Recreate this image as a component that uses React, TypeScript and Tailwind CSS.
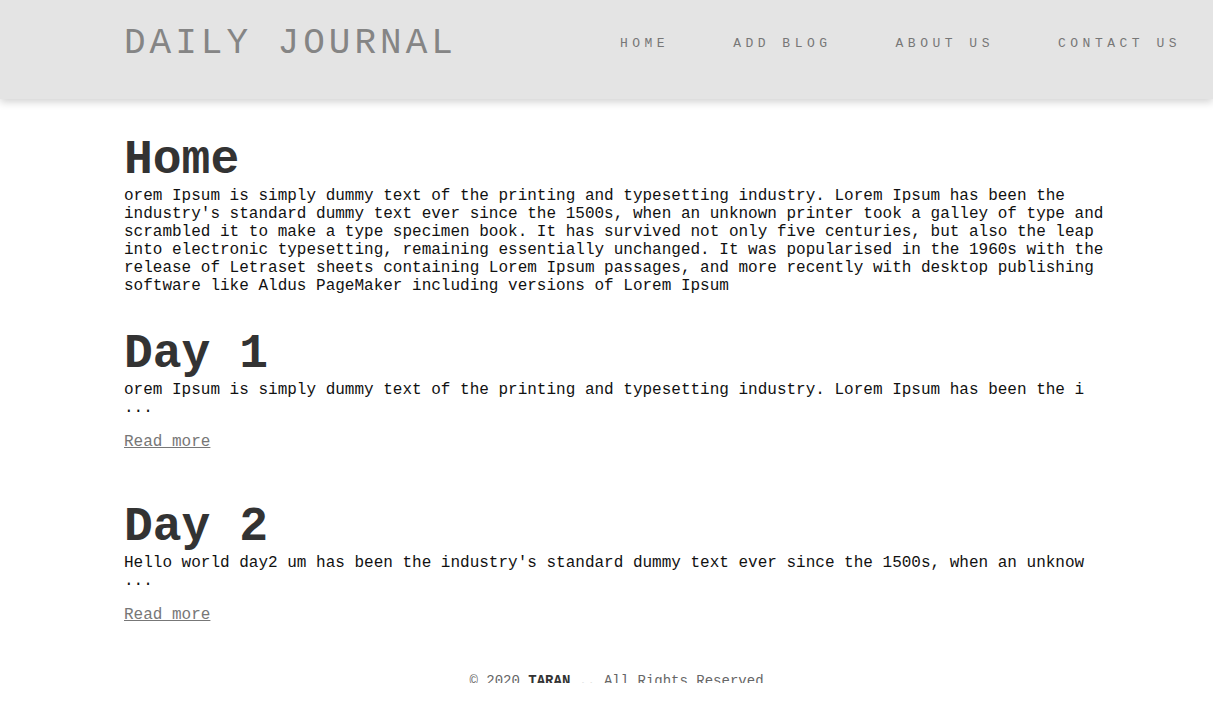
const navItems = ['HOME', 'ADD BLOG', 'ABOUT US', 'CONTACT US'];

const posts = [
  {
    title: 'Day 1',
    excerpt:
      'orem Ipsum is simply dummy text of the printing and typesetting industry. Lorem Ipsum has been the i ...',
  },
  {
    title: 'Day 2',
    excerpt:
      "Hello world day2 um has been the industry's standard dummy text ever since the 1500s, when an unknow ...",
  },
];

const intro =
  "orem Ipsum is simply dummy text of the printing and typesetting industry. Lorem Ipsum has been the industry's standard dummy text ever since the 1500s, when an unknown printer took a galley of type and scrambled it to make a type specimen book. It has survived not only five centuries, but also the leap into electronic typesetting, remaining essentially unchanged. It was popularised in the 1960s with the release of Letraset sheets containing Lorem Ipsum passages, and more recently with desktop publishing software like Aldus PageMaker including versions of Lorem Ipsum";

export default function App() {
  return (
    <div className="min-h-screen bg-white font-['Liberation_Mono','Courier_New',monospace] text-[#111]">
      <header className="flex h-[99px] items-start justify-between bg-[#e4e4e4] pl-[124px] shadow-[0_3px_8px_rgba(0,0,0,0.18)]">
        <a href="#" className="mt-[24px] text-[36px] leading-[40px] tracking-[4px] text-[#858585]">
          DAILY JOURNAL
        </a>
        <nav className="mt-[36px] flex text-[13px] leading-[16px] tracking-[4.5px] text-[#777]">
          {navItems.map((item) => (
            <a key={item} href="#" className="px-[32px]">
              {item}
            </a>
          ))}
        </nav>
      </header>

      <main className="w-[1109px] pl-[124px] pt-[34px]">
        <section className="mb-[32px]">
          <h1 className="text-[48px] font-bold leading-[54px] text-[#333]">Home</h1>
          <p className="text-[16px] leading-[18px]">{intro}</p>
        </section>

        {posts.map((post) => (
          <section key={post.title} className="mb-[49px]">
            <h1 className="text-[48px] font-bold leading-[54px] text-[#333]">{post.title}</h1>
            <p className="mb-[16px] text-[16px] leading-[18px]">{post.excerpt}</p>
            <p className="mb-[16px] text-[16px] leading-[18px]">
              <a href="#" className="text-[#777] underline">
                Read more
              </a>
            </p>
          </section>
        ))}

        <footer className="mt-[1px] h-[10px] overflow-hidden text-center text-[14px] leading-[16px] text-[#666]">
          © 2020 <b className="text-[#333]">TARAN</b> .. All Rights Reserved
        </footer>
      </main>
    </div>
  );
}
